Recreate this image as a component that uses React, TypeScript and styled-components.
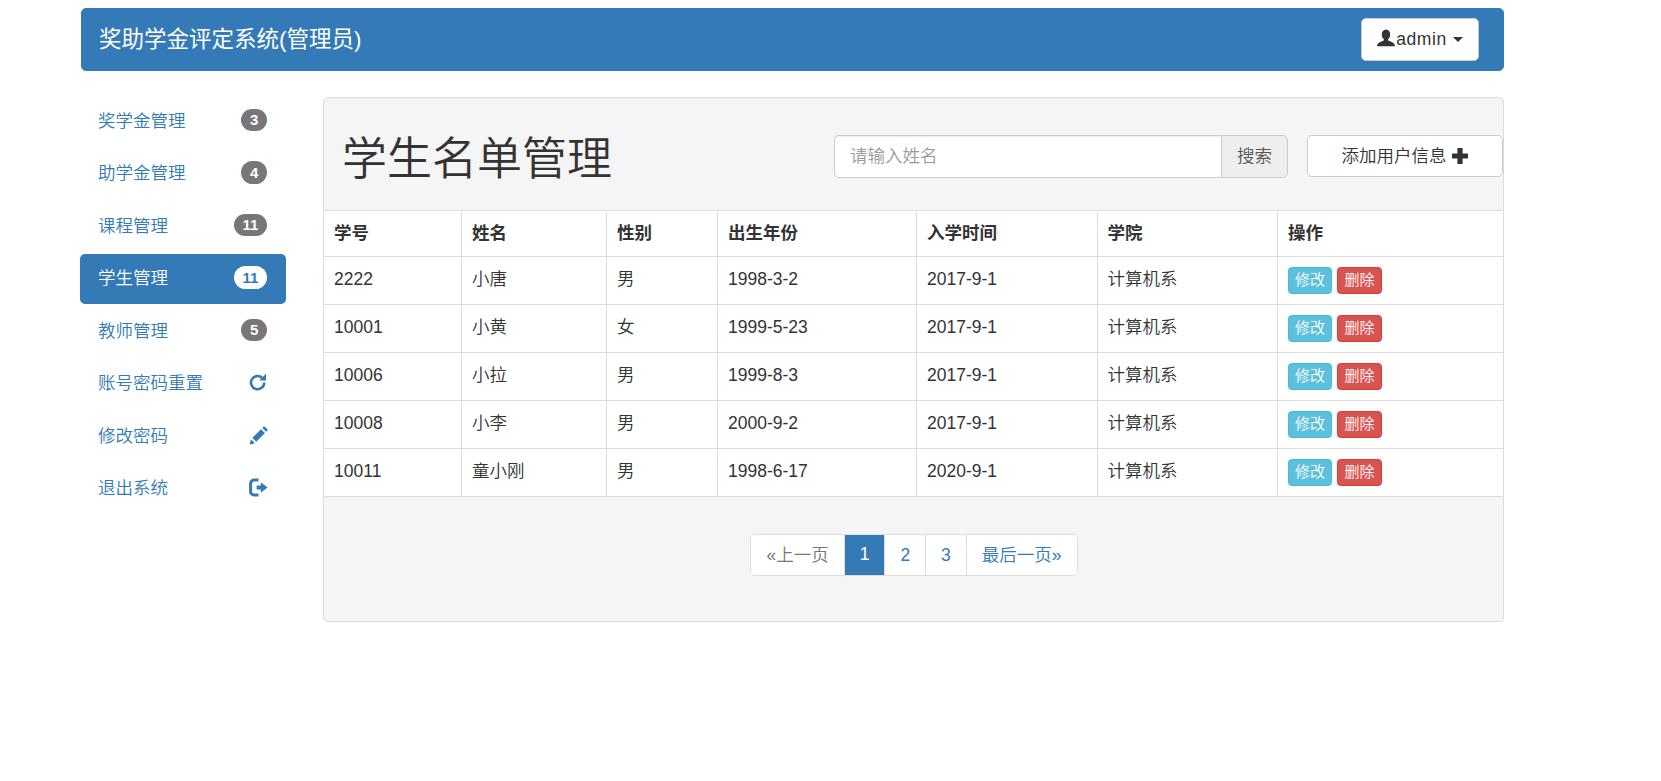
import React from 'react';
import styled, { createGlobalStyle } from 'styled-components';

const GlobalStyle = createGlobalStyle`
  * {
    box-sizing: border-box;
  }
  body {
    margin: 0;
    background: #fff;
    color: #333;
    font-family: 'Liberation Sans', 'Noto Sans CJK SC', sans-serif;
    font-size: 17.5px;
    font-weight: 350;
    line-height: 25px;
  }
`;

const menu = [
  { label: '奖学金管理', badge: '3' },
  { label: '助学金管理', badge: '4' },
  { label: '课程管理', badge: '11' },
  { label: '学生管理', badge: '11', active: true },
  { label: '教师管理', badge: '5' },
  { label: '账号密码重置', icon: 'refresh' },
  { label: '修改密码', icon: 'pencil' },
  { label: '退出系统', icon: 'logout' },
];

const columns = ['学号', '姓名', '性别', '出生年份', '入学时间', '学院', '操作'];
const widths = [137.5, 145, 111, 199, 180.5, 180.5, 225.5];

const students = [
  ['2222', '小唐', '男', '1998-3-2', '2017-9-1', '计算机系'],
  ['10001', '小黄', '女', '1999-5-23', '2017-9-1', '计算机系'],
  ['10006', '小拉', '男', '1999-8-3', '2017-9-1', '计算机系'],
  ['10008', '小李', '男', '2000-9-2', '2017-9-1', '计算机系'],
  ['10011', '童小刚', '男', '1998-6-17', '2020-9-1', '计算机系'],
];

function MenuIcon({ name }: { name: string }) {
  if (name === 'refresh') {
    return (
      <S.MenuSvg viewBox='0 0 19 19'>
        <path d='M13.2 4.9A6.6 6.6 0 1 0 15.2 9.6' fill='none' stroke='currentColor' strokeWidth='2.6' />
        <path d='M17 .8V7.6H10.2Z' fill='currentColor' />
      </S.MenuSvg>
    );
  }
  if (name === 'pencil') {
    return (
      <S.MenuSvg viewBox='0 0 18 18'>
        <path d='M.6 17.6l1.3-5 3.7 3.7z' fill='currentColor' />
        <path d='M3.2 11.2 11.4 3l3.7 3.7-8.2 8.2z' fill='currentColor' />
        <path d='M12.6 1.8l1-1a1 1 0 0 1 1.4 0l2.3 2.3a1 1 0 0 1 0 1.4l-1 1z' fill='currentColor' />
      </S.MenuSvg>
    );
  }
  return (
    <S.MenuSvg viewBox='0 0 19 18'>
      <path d='M9.5 1.6H5A3.4 3.4 0 0 0 1.6 5v8A3.4 3.4 0 0 0 5 16.4h4.5' fill='none' stroke='currentColor' strokeWidth='3' />
      <path d='M7.6 7h4.2V3.8L18.6 9l-6.8 5.2V11H7.6z' fill='currentColor' />
    </S.MenuSvg>
  );
}

export default function App() {
  return (
    <S.Page>
      <GlobalStyle />
      <S.Navbar>
        <S.Brand>奖助学金评定系统(管理员)</S.Brand>
        <S.UserButton type='button'>
          <S.UserSvg viewBox='0 0 18 18'>
            <path
              d='M9 .6c2.700 0 4.200 2.200 4.200 4.800 0 2-.8 3.700-2.100 4.800v1.200c2 .9 6.900 1.800 6.900 5.800H0c0-4 4.900-4.900 6.900-5.800v-1.200C5.600 9.100 4.800 7.400 4.800 5.400 4.800 2.800 6.300.6 9 .6z'
              fill='currentColor'
            />
          </S.UserSvg>
          <S.UserName>admin</S.UserName>
          <S.Caret />
        </S.UserButton>
      </S.Navbar>
      <S.Content>
        <S.Sidebar>
          {menu.map((item) => (
            <S.MenuItem key={item.label} href='#' $active={item.active}>
              {item.label}
              {item.badge && <S.Badge $active={item.active}>{item.badge}</S.Badge>}
              {item.icon && <MenuIcon name={item.icon} />}
            </S.MenuItem>
          ))}
        </S.Sidebar>
        <S.Panel>
          <S.PanelHeading>
            <S.Title>学生名单管理</S.Title>
            <S.SearchGroup>
              <S.SearchInput placeholder='请输入姓名' />
              <S.SearchAddon>搜索</S.SearchAddon>
            </S.SearchGroup>
            <S.AddButton type='button'>
              添加用户信息
              <S.PlusSvg viewBox='0 0 18 18'>
                <path d='M6.400 1h5.200v5.400H17v5.200h-5.400V17H6.400v-5.400H1V6.400h5.400z' fill='currentColor' />
              </S.PlusSvg>
            </S.AddButton>
          </S.PanelHeading>
          <S.Table>
            <colgroup>
              {widths.map((w, i) => (
                <col key={i} width={w} />
              ))}
            </colgroup>
            <thead>
              <tr>
                {columns.map((c) => (
                  <S.HeadCell key={c}>{c}</S.HeadCell>
                ))}
              </tr>
            </thead>
            <tbody>
              {students.map((row) => (
                <tr key={row[0]}>
                  {row.map((v, i) => (
                    <S.Cell key={i}>{v}</S.Cell>
                  ))}
                  <S.Cell>
                    <S.Actions>
                      <S.SmallButton type='button' $kind='info'>修改</S.SmallButton>
                      <S.SmallButton type='button' $kind='danger'>删除</S.SmallButton>
                    </S.Actions>
                  </S.Cell>
                </tr>
              ))}
            </tbody>
          </S.Table>
          <S.PanelFooter>
            <S.Pagination>
              <S.PageLink $disabled>«上一页</S.PageLink>
              <S.PageLink $active>1</S.PageLink>
              <S.PageLink>2</S.PageLink>
              <S.PageLink>3</S.PageLink>
              <S.PageLink>最后一页»</S.PageLink>
            </S.Pagination>
          </S.PanelFooter>
        </S.Panel>
      </S.Content>
    </S.Page>
  );
}

const S = {
  Page: styled.div`
    width: 1504px;
    padding: 8px 0 0 80px;
  `,
  Navbar: styled.nav`
    margin-left: 1px;
    height: 63px;
    padding: 0 24px 0 17px;
    background-color: #337ab7;
    border: 1px solid #337ab7;
    border-radius: 5px;
    display: flex;
    align-items: center;
    justify-content: space-between;
  `,
  Brand: styled.div`
    color: #fff;
    font-size: 22.5px;
    font-weight: 400;
    line-height: 25px;
  `,
  UserButton: styled.button`
    height: 42.5px;
    width: 118px;
    padding: 0;
    background: #fff;
    border: 1px solid #ccc;
    border-radius: 5px;
    color: #333;
    font: inherit;
    display: flex;
    align-items: center;
    justify-content: center;
  `,
  UserSvg: styled.svg`
    width: 18px;
    height: 18px;
    margin: -3px 1px 0 0;
    color: #333;
  `,
  UserName: styled.span`
    letter-spacing: 0.6px;
  `,
  Caret: styled.span`
    width: 0;
    height: 0;
    margin-left: 6px;
    border-top: 5px solid #333;
    border-left: 5px solid transparent;
    border-right: 5px solid transparent;
  `,
  Content: styled.div`
    display: flex;
    gap: 37px;
    margin-top: 26px;
  `,
  Sidebar: styled.div`
    width: 206px;
    flex: none;
    margin-top: -1px;
    display: flex;
    flex-direction: column;
    gap: 2.5px;
  `,
  MenuItem: styled.a<{ $active?: boolean }>`
    height: 50px;
    padding: 12.5px 19px 12.5px 18px;
    border-radius: 5px;
    display: flex;
    justify-content: space-between;
    align-items: flex-start;
    text-decoration: none;
    color: ${(p) => (p.$active ? '#fff' : '#337ab7')};
    background-color: ${(p) => (p.$active ? '#337ab7' : 'transparent')};
  `,
  Badge: styled.span<{ $active?: boolean }>`
    min-width: 12.5px;
    padding: 3.75px 8.75px;
    border-radius: 12.5px;
    font-size: 15px;
    font-weight: bold;
    line-height: 15px;
    color: ${(p) => (p.$active ? '#337ab7' : '#fff')};
    background-color: ${(p) => (p.$active ? '#fff' : '#777')};
  `,
  MenuSvg: styled.svg`
    width: 19px;
    height: 19px;
    margin: 2px -1px 0 0;
    color: #337ab7;
  `,
  Panel: styled.div`
    width: 1181px;
    flex: none;
    background-color: #f5f5f5;
    border: 1px solid #ddd;
    border-radius: 5px;
    box-shadow: 0 1px 1px rgba(0, 0, 0, 0.05);
  `,
  PanelHeading: styled.div`
    height: 112px;
    padding: 37px 0 0 18px;
    display: flex;
    align-items: flex-start;
  `,
  Title: styled.h1`
    margin: 0 auto 0 0;
    font-size: 45px;
    font-weight: 350;
    line-height: 49.5px;
    color: #333;
  `,
  SearchGroup: styled.div`
    width: 454px;
    height: 42.5px;
    display: flex;
  `,
  SearchInput: styled.input`
    flex: 1;
    min-width: 0;
    padding: 0 15px;
    font: inherit;
    color: #555;
    background: #fff;
    border: 1px solid #ccc;
    border-right: 0;
    border-radius: 5px 0 0 5px;
    box-shadow: inset 0 1px 1px rgba(0, 0, 0, 0.075);
    &::placeholder {
      color: #999;
    }
  `,
  SearchAddon: styled.span`
    width: 67px;
    display: flex;
    align-items: center;
    justify-content: center;
    color: #555;
    background-color: #eee;
    border: 1px solid #ccc;
    border-radius: 0 5px 5px 0;
  `,
  AddButton: styled.button`
    width: 196px;
    height: 42px;
    margin-left: 19px;
    padding: 0;
    background: #fff;
    border: 1px solid #ccc;
    border-radius: 5px;
    color: #333;
    font: inherit;
    display: flex;
    align-items: center;
    justify-content: center;
    gap: 4px;
  `,
  PlusSvg: styled.svg`
    width: 18px;
    height: 18px;
  `,
  Table: styled.table`
    width: 100%;
    table-layout: fixed;
    border-collapse: collapse;
    background-color: #fff;
  `,
  HeadCell: styled.th`
    height: 46px;
    padding: 10px;
    text-align: left;
    vertical-align: top;
    font-weight: bold;
    border: 1px solid #ddd;
    &:first-child {
      border-left: 0;
    }
    &:last-child {
      border-right: 0;
    }
  `,
  Cell: styled.td`
    height: 48px;
    padding: 10px;
    vertical-align: top;
    border: 1px solid #ddd;
    &:first-child {
      border-left: 0;
    }
    &:last-child {
      border-right: 0;
    }
  `,
  Actions: styled.div`
    display: flex;
    gap: 5px;
  `,
  SmallButton: styled.button<{ $kind: 'info' | 'danger' }>`
    width: ${(p) => (p.$kind === 'info' ? '44px' : '45px')};
    height: 27px;
    padding: 0;
    font: inherit;
    font-size: 15px;
    line-height: 22.5px;
    color: #fff;
    border-radius: 3.75px;
    border: 1px solid ${(p) => (p.$kind === 'info' ? '#46b8da' : '#d43f3a')};
    background-color: ${(p) => (p.$kind === 'info' ? '#5bc0de' : '#d9534f')};
  `,
  PanelFooter: styled.div`
    height: 124px;
    padding: 37px 0 0 1px;
    display: flex;
    justify-content: center;
    align-items: flex-start;
  `,
  Pagination: styled.div`
    display: flex;
    height: 42px;
    border-radius: 5px;
    overflow: hidden;
    background-color: #fff;
    border: 1px solid #ddd;
  `,
  PageLink: styled.a<{ $active?: boolean; $disabled?: boolean }>`
    padding: 7.5px 15px;
    margin-top: ${(p) => (p.$active ? '-1px' : '0')};
    margin-bottom: ${(p) => (p.$active ? '-1px' : '0')};
    line-height: 25px;
    color: ${(p) => (p.$active ? '#fff' : p.$disabled ? '#777' : '#337ab7')};
    background-color: ${(p) => (p.$active ? '#337ab7' : '#fff')};
    & + & {
      border-left: 1px solid #ddd;
    }
  `,
};
